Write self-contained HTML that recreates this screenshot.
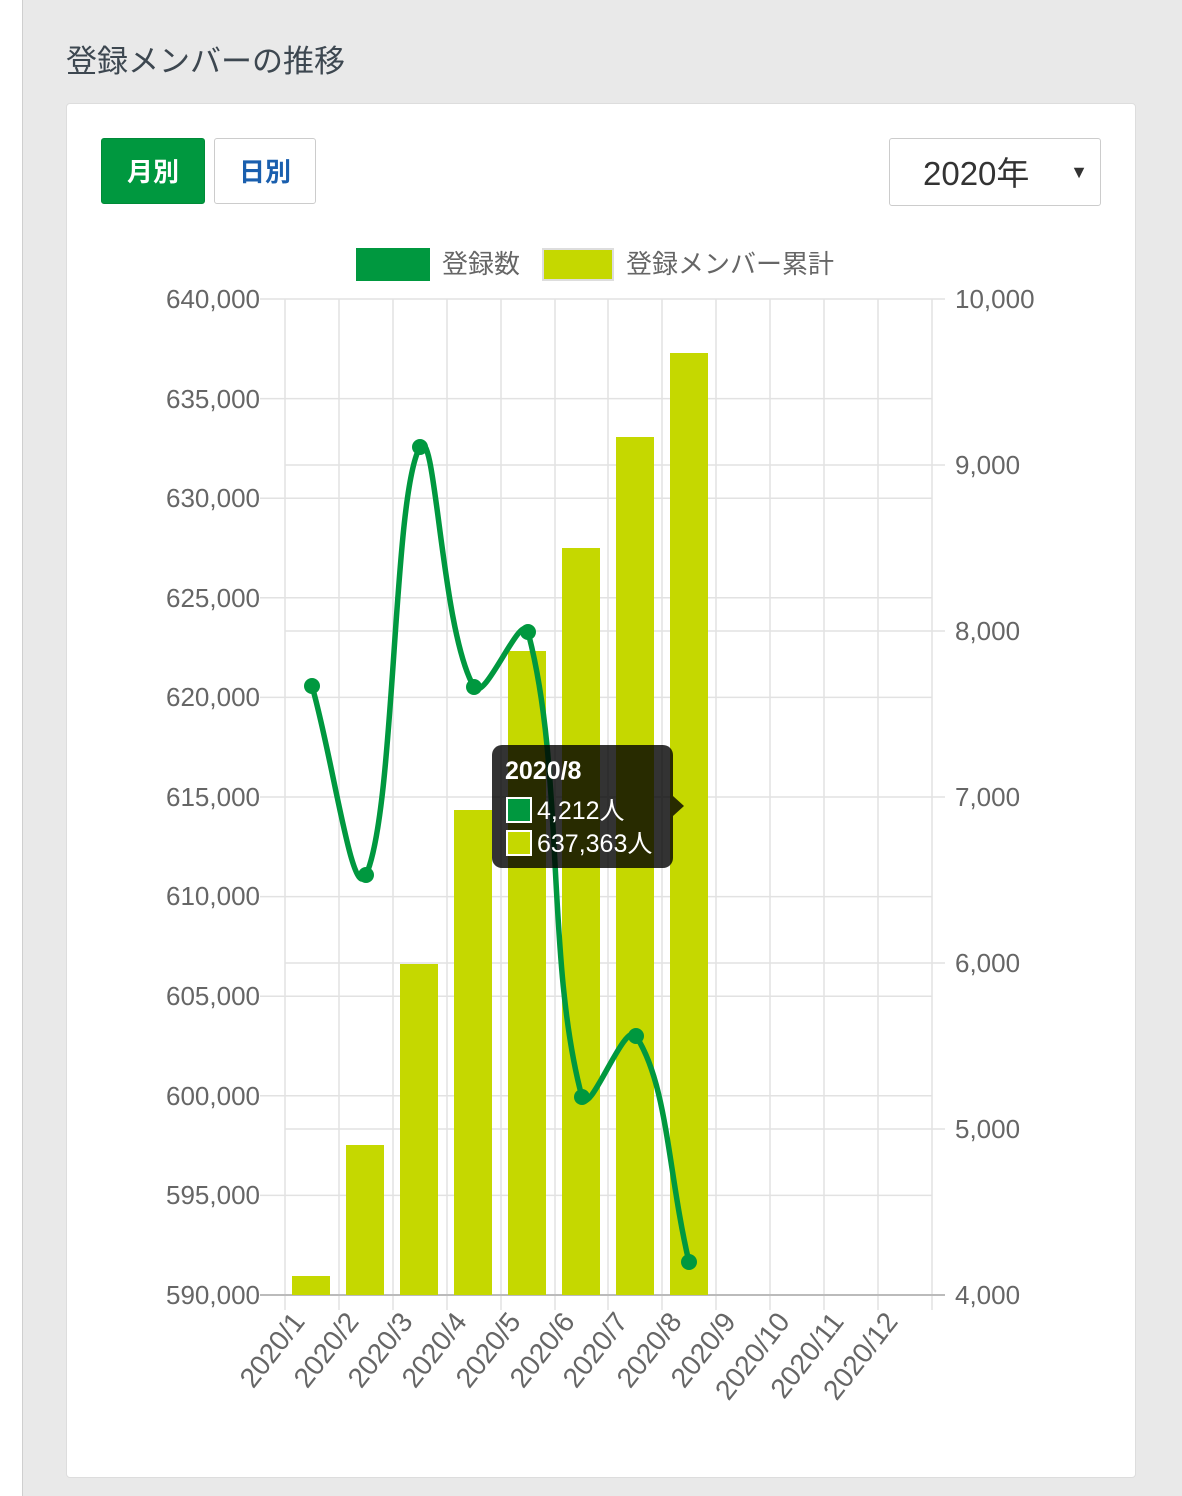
<!DOCTYPE html>
<html><head><meta charset="utf-8"><style>
html,body{margin:0;padding:0;width:1182px;height:1496px;overflow:hidden;background:#fff;font-family:"Liberation Sans","Noto Sans CJK JP",sans-serif}
.bg{position:absolute;left:22px;top:0;width:1160px;height:1496px;background:#e9e9e9}
.lb{position:absolute;left:22px;top:0;width:1px;height:1496px;background:#cfcfcf}
.t{position:absolute;left:66px;top:36px;font-size:31px;color:#3d4750}
.card{position:absolute;left:66px;top:103px;width:1068px;height:1373px;background:#fff;border:1px solid #ddd;border-radius:4px}
.b{position:absolute;top:138px;height:66px;border-radius:3px;font-size:26px;font-weight:bold;text-align:center;line-height:66px}
.sel{position:absolute;left:889px;top:138px;width:210px;height:66px;border:1px solid #ccc;border-radius:3px;background:#fff;font-size:33px;color:#333;line-height:70px}
svg{position:absolute;left:0;top:0}
</style></head><body>
<div class="bg"></div><div class="lb"></div>
<div class="t">登録メンバーの推移</div>
<div class="card"></div>
<div class="b" style="left:101px;width:104px;background:#00983f;color:#fff;border:1px solid #008a38;box-sizing:border-box">月別</div>
<div class="b" style="left:214px;width:102px;background:#fff;color:#1a5fae;border:1px solid #ccc;box-sizing:border-box">日別</div>
<div class="sel"><span style="position:absolute;left:33px">2020年</span><span style="position:absolute;right:12px;font-size:18px;line-height:66px">▼</span></div>
<svg width="1182" height="1496" font-family="Liberation Sans, Noto Sans CJK JP, sans-serif">
<rect x="356" y="248" width="74" height="33" fill="#00983f"/>
<text x="442" y="273" font-size="26" fill="#666">登録数</text>
<rect x="543" y="249" width="70" height="31" fill="#c5d800" stroke="#ddd" stroke-width="2"/>
<text x="626" y="273" font-size="26" fill="#666">登録メンバー累計</text>
<g stroke="#e2e2e2" stroke-width="1.5">
<line x1="260" y1="299" x2="945" y2="299"/><line x1="260" y1="398.6" x2="932" y2="398.6"/><line x1="260" y1="498.2" x2="932" y2="498.2"/><line x1="260" y1="597.8" x2="932" y2="597.8"/><line x1="260" y1="697.4" x2="932" y2="697.4"/><line x1="260" y1="797" x2="945" y2="797"/><line x1="260" y1="896.6" x2="932" y2="896.6"/><line x1="260" y1="996.2" x2="932" y2="996.2"/><line x1="260" y1="1095.8" x2="932" y2="1095.8"/><line x1="260" y1="1195.4" x2="932" y2="1195.4"/>
<line x1="285" y1="465" x2="945" y2="465"/><line x1="285" y1="631" x2="945" y2="631"/><line x1="285" y1="963" x2="945" y2="963"/><line x1="285" y1="1129" x2="945" y2="1129"/>
<line x1="285" y1="299" x2="285" y2="1310"/><line x1="339" y1="299" x2="339" y2="1310"/><line x1="393" y1="299" x2="393" y2="1310"/><line x1="447" y1="299" x2="447" y2="1310"/><line x1="501" y1="299" x2="501" y2="1310"/><line x1="555" y1="299" x2="555" y2="1310"/><line x1="608" y1="299" x2="608" y2="1310"/><line x1="662" y1="299" x2="662" y2="1310"/><line x1="716" y1="299" x2="716" y2="1310"/><line x1="770" y1="299" x2="770" y2="1310"/><line x1="824" y1="299" x2="824" y2="1310"/><line x1="878" y1="299" x2="878" y2="1310"/><line x1="932" y1="299" x2="932" y2="1310"/>
</g>
<line x1="260" y1="1295" x2="945" y2="1295" stroke="#bbb" stroke-width="2"/>
<g font-size="26" fill="#666" text-anchor="end">
<text x="260" y="308">640,000</text><text x="260" y="408">635,000</text><text x="260" y="507">630,000</text><text x="260" y="607">625,000</text><text x="260" y="706">620,000</text><text x="260" y="806">615,000</text><text x="260" y="905">610,000</text><text x="260" y="1005">605,000</text><text x="260" y="1105">600,000</text><text x="260" y="1204">595,000</text><text x="260" y="1304">590,000</text>
</g>
<g font-size="26" fill="#666">
<text x="955" y="308">10,000</text><text x="955" y="474">9,000</text><text x="955" y="640">8,000</text><text x="955" y="806">7,000</text><text x="955" y="972">6,000</text><text x="955" y="1138">5,000</text><text x="955" y="1304">4,000</text>
</g>
<g fill="#c5d800">
<rect x="292" y="1276" width="38" height="19"/><rect x="346" y="1145" width="38" height="150"/><rect x="400" y="964" width="38" height="331"/><rect x="454" y="810" width="38" height="485"/><rect x="508" y="651" width="38" height="644"/><rect x="562" y="548" width="38" height="747"/><rect x="616" y="437" width="38" height="858"/><rect x="670" y="353" width="38" height="942"/>
</g>
<path d="M312,686 C333.6,761.6 352.5,904.9 366,875 C395.7,809.3 392.5,494.9 420,447 C435.7,419.7 441.1,630.6 474,687 C484.3,704.6 521.9,608.8 528,632 C565.1,772.8 545.2,959.4 582,1097 C588.4,1121 624.9,1018.8 636,1036 C667.7,1084.8 667.8,1171.6 689,1262" fill="none" stroke="#00983f" stroke-width="5.5"/>
<g fill="#00983f"><circle cx="312" cy="686" r="8"/><circle cx="366" cy="875" r="8"/><circle cx="420" cy="447" r="8"/><circle cx="474" cy="687" r="8"/><circle cx="528" cy="632" r="8"/><circle cx="582" cy="1097" r="8"/><circle cx="636" cy="1036" r="8"/><circle cx="689" cy="1262" r="8"/></g>
<g font-size="28" fill="#666" text-anchor="end">
<text transform="translate(306,1322) rotate(-52)">2020/1</text><text transform="translate(360,1322) rotate(-52)">2020/2</text><text transform="translate(414,1322) rotate(-52)">2020/3</text><text transform="translate(468,1322) rotate(-52)">2020/4</text><text transform="translate(522,1322) rotate(-52)">2020/5</text><text transform="translate(576,1322) rotate(-52)">2020/6</text><text transform="translate(629,1322) rotate(-52)">2020/7</text><text transform="translate(683,1322) rotate(-52)">2020/8</text><text transform="translate(737,1322) rotate(-52)">2020/9</text><text transform="translate(791,1322) rotate(-52)">2020/10</text><text transform="translate(845,1322) rotate(-52)">2020/11</text><text transform="translate(899,1322) rotate(-52)">2020/12</text>
</g>
<rect x="492" y="745" width="181" height="123" rx="10" fill="rgba(0,0,0,0.8)"/>
<path d="M673,796 L684,806 L673,816 Z" fill="rgba(0,0,0,0.8)"/>
<text x="505" y="779" font-size="25" font-weight="bold" fill="#fff">2020/8</text>
<rect x="507" y="798" width="24" height="24" fill="#00983f" stroke="#fff" stroke-width="2"/>
<text x="537" y="819" font-size="25" fill="#fff">4,212人</text>
<rect x="507" y="831" width="24" height="24" fill="#c5d800" stroke="#fff" stroke-width="2"/>
<text x="537" y="852" font-size="25" fill="#fff">637,363人</text>
</svg>
</body></html>
